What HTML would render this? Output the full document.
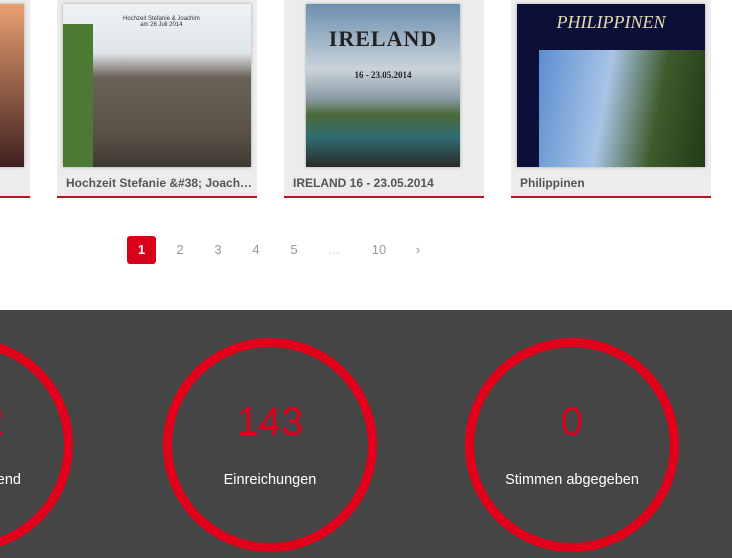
<!DOCTYPE html>
<html><head><meta charset="utf-8"><style>
*{margin:0;padding:0;box-sizing:border-box}
body{width:732px;height:558px;overflow:hidden;background:#fff;font-family:"Liberation Sans",Arial,sans-serif;position:relative}
.card{position:absolute;top:0;width:200px;height:198px;background:#ececec;border-bottom:2px solid #c0121d}
.card .img{position:absolute;left:6px;top:4px;width:188px;height:163px;box-shadow:0 0 3px rgba(0,0,0,.3)}
.card .cap{position:absolute;left:9px;top:176px;font-size:12px;font-weight:bold;color:#555;white-space:nowrap}
.pg{position:absolute;top:236px;height:28px;font-size:13px;color:#999;line-height:28px;text-align:center}
.dark{position:absolute;left:0;top:310px;width:732px;height:248px;background:#454545;overflow:hidden}
.c{position:absolute;top:28px;width:214px;height:214px;border:9px solid #e2001a;border-radius:50%}
.num{position:absolute;top:90px;width:300px;text-align:center;font-size:40px;color:#d9001b}
.lbl{position:absolute;top:162px;width:300px;text-align:center;font-size:14.5px;color:#fff}
</style></head><body>
<div class="card" style="left:-170px"><div class="img" style="background:linear-gradient(#e8a070,#402020)"></div></div>
<div class="card" style="left:57px"><div class="img" style="background:linear-gradient(180deg,#eef2f5 0%,#dfe6ea 30%,#6b6358 45%,#5a5046 80%,#3e3a30 100%)">
<div style="position:absolute;left:0;top:20px;width:30px;height:143px;background:#4c7a35"></div>
<div style="position:absolute;left:60px;top:12px;font-size:6px;color:#333;text-align:center">Hochzeit Stefanie &amp; Joachim<br>am 26 Juli 2014</div></div>
<div class="cap">Hochzeit Stefanie &amp;#38; Joach…</div></div>
<div class="card" style="left:284px"><div class="img" style="left:22px;width:154px;background:linear-gradient(180deg,#6c8fb0 0%,#c9d3da 40%,#8a9aa5 58%,#4c6a3a 68%,#2f6c72 82%,#2a2a28 100%)">
<div style="position:absolute;left:0;top:22px;width:154px;text-align:center;font-family:'Liberation Serif',serif;font-weight:bold;font-size:22px;color:#222;letter-spacing:1px">IRELAND</div>
<div style="position:absolute;left:0;top:66px;width:154px;text-align:center;font-family:'Liberation Serif',serif;font-weight:bold;font-size:9px;color:#222">16 - 23.05.2014</div></div>
<div class="cap">IRELAND 16 - 23.05.2014</div></div>
<div class="card" style="left:511px"><div class="img" style="background:#0c1038">
<div style="position:absolute;left:0;top:8px;width:188px;text-align:center;font-family:'Liberation Serif',serif;font-style:italic;font-size:18px;color:#e6dcb0">PHILIPPINEN</div>
<div style="position:absolute;left:22px;top:46px;width:166px;height:117px;background:linear-gradient(100deg,#5b8ed0 0%,#a8c4e6 40%,#3f5a2a 70%,#233a18 100%)"></div></div>
<div class="cap">Philippinen</div></div>
<div class="pg" style="left:127px;width:29px;background:#d9001b;color:#fff;font-weight:bold;border-radius:3px">1</div>
<div class="pg" style="left:170px;width:20px">2</div>
<div class="pg" style="left:208px;width:20px">3</div>
<div class="pg" style="left:246px;width:20px">4</div>
<div class="pg" style="left:284px;width:20px">5</div>
<div class="pg" style="left:324px;width:20px;color:#ccc">…</div>
<div class="pg" style="left:368px;width:22px">10</div>
<div class="pg" style="left:410px;width:16px">›</div>
<div class="dark">
<div class="c" style="left:-141px"></div>
<div class="num" style="left:-296px;text-align:right">2</div>
<div class="lbl" style="left:-179px;width:200px;text-align:right">Anwesend</div>
<div class="c" style="left:163px"></div>
<div class="num" style="left:120px">143</div>
<div class="lbl" style="left:120px">Einreichungen</div>
<div class="c" style="left:465px"></div>
<div class="num" style="left:422px">0</div>
<div class="lbl" style="left:422px">Stimmen abgegeben</div>
</div>
</body></html>
